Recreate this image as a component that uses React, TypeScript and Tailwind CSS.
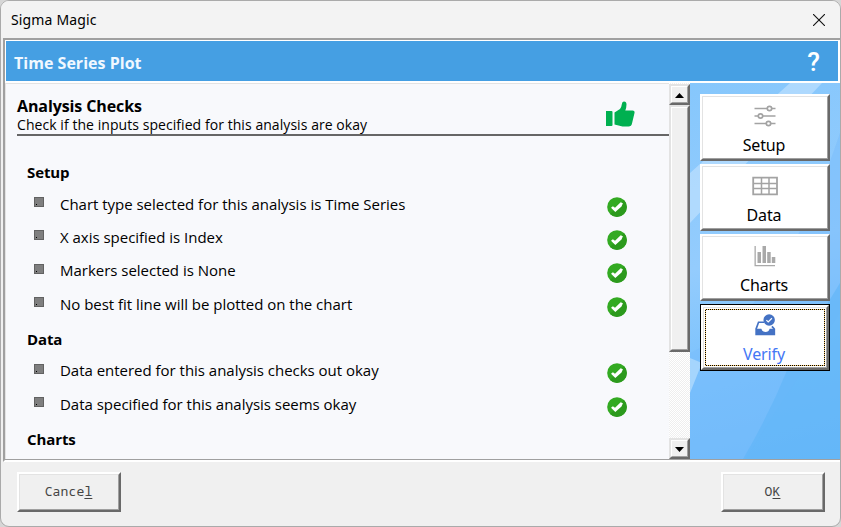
import React from "react";

const bevel =
  "border-2 border-t-white border-l-white border-r-[#696969] border-b-[#696969]";
const innerBevel =
  "border border-t-[#e3e3e3] border-l-[#e3e3e3] border-r-[#a0a0a0] border-b-[#a0a0a0]";

function CheckBadge() {
  return (
    <svg width="20" height="20" viewBox="0 0 20 20">
      <circle cx="10" cy="10" r="9.8" fill="#33aa22" />
      <path d="M17 3a9.8 9.8 0 0 1-14 14z" fill="#2c9a1d" />
      <path d="M4 10.800l1.900-1.500 2.100 1.500 5.700-5.500 2.200 1-1.400 3.300-6.200 5.500z" fill="#fff" />
    </svg>
  );
}

function SetupIcon() {
  return (
    <svg width="26" height="26" viewBox="0 0 26 26" fill="#fff" stroke="#a3a3a3" strokeWidth="1.7">
      <path d="M2.500 5.500h21M2.500 13h21M2.500 20.500h21" />
      <circle cx="17.5" cy="5.500" r="2.200" />
      <circle cx="8.500" cy="13" r="2.200" />
      <circle cx="16.500" cy="20.500" r="2.200" />
    </svg>
  );
}

function DataIcon() {
  return (
    <svg width="26" height="26" viewBox="0 0 26 26" fill="none" stroke="#a3a3a3">
      <path d="M1.200 4.700h23.800v16.600H1.200z" strokeWidth="1.800" />
      <path d="M1 10.500h24M1 15.500h24M9.500 4v18M17 4v18" strokeWidth="1.500" />
    </svg>
  );
}

function ChartsIcon() {
  return (
    <svg width="26" height="26" viewBox="0 0 26 26" fill="#a9a9a9">
      <path d="M2.500 3h1.300v19h19.200v1.300H2.500zM5.500 9h3.500v11H5.500zM10.500 3h3.500v17h-3.500zM15.200 9h3.500v11h-3.500zM19.800 14h3.500v6h-3.500z" />
    </svg>
  );
}

function VerifyIcon() {
  return (
    <svg width="26" height="26" viewBox="0 0 26 26" fill="#4472c4">
      <path d="M2.500 17h6.500q1 3.500 4.500 3.500t4.500-3.500h6v7h-21.500z" />
      <path d="M3.300 17.500l2.700-7.500h6M20.500 14.500l2.700 3" fill="none" stroke="#4472c4" strokeWidth="1.800" />
      <circle cx="17.500" cy="7.500" r="6.200" />
      <path d="M14.500 7.700l2 2 4-4" fill="none" stroke="#fff" strokeWidth="1.300" />
    </svg>
  );
}

function NavButton({ label, icon, active = false }: { label: string; icon: React.ReactNode; active?: boolean }) {
  return (
    <button className={`h-[67px] w-[130px] bg-white ${active ? "border border-black" : ""}`}>
      <span className={`block h-full ${bevel}`}>
        <span className={`block h-full ${innerBevel} ${active ? "p-px" : ""}`}>
          <span
            className={`block h-full ${
              active ? "bg-[repeating-conic-gradient(#000_0_25%,#ffcf70_0_50%)] bg-[length:2px_2px] p-px" : ""
            }`}
          >
            <span
              className={`flex h-full flex-col items-center bg-white ${
                active ? "pt-[3px] text-[#4477f5]" : "pt-[6px] text-black"
              }`}
            >
              {icon}
              <span
                className={`mr-[2px] font-['Noto_Sans',sans-serif] text-[16px] leading-[22px] tracking-[-0.15px] ${
                  active ? "mt-[6px]" : "mt-[5px]"
                }`}
              >
                {label}
              </span>
            </span>
          </span>
        </span>
      </span>
    </button>
  );
}

function Heading({ children }: { children: string }) {
  return (
    <div className="flex h-[33.35px] items-center pt-px pl-[21px] text-[15px] font-bold">
      <span className="tracking-[-0.1px]">{children}</span>
    </div>
  );
}

function Check({ children }: { children: string }) {
  return (
    <div className="flex h-[33.35px] items-center pl-7">
      <span className="mb-[6px] flex size-[10px] items-end border border-[#626262] bg-[#7f7f7f] pb-px pl-px">
        <span className="size-px bg-black" />
      </span>
      <span className="mb-[2px] ml-4 w-[547px] whitespace-nowrap text-[15px] tracking-[-0.02px]">{children}</span>
      <span className="mt-[3px]">
        <CheckBadge />
      </span>
    </div>
  );
}

function ScrollArrow({ down = false }: { down?: boolean }) {
  return (
    <div className="h-[21px] shrink-0 border-2 border-t-[#e3e3e3] border-l-[#e3e3e3] border-r-[#696969] border-b-[#696969] bg-[#f0f0f0]">
      <div className="flex h-full items-center justify-center border border-t-white border-l-white border-r-[#a0a0a0] border-b-[#a0a0a0] pt-[2px]">
        <svg width="9" height="5" viewBox="0 0 9 5">
          <path d={down ? "M0 0h9L4.500 5z" : "M0 5h9L4.500 0z"} />
        </svg>
      </div>
    </div>
  );
}

function FooterButton({ before, accessKey }: { before: string; accessKey: string }) {
  return (
    <button className={`h-10 w-[104px] bg-[#f0f0f0] ${bevel}`}>
      <span className={`flex h-full items-center justify-center font-['Noto_Sans_Mono','DejaVu_Sans_Mono',monospace] text-[13px] text-[#444] ${innerBevel}`}>
        <span className="mr-px tracking-[0.15px]">
          {before}
          <span className="underline underline-offset-2">{accessKey}</span>
        </span>
      </span>
    </button>
  );
}

export default function App() {
  return (
    <div className="h-[527px] w-[841px] overflow-hidden bg-[#d6d6d6] font-['Open_Sans',sans-serif] text-black">
      <div className="flex h-[527px] w-[841px] flex-col overflow-hidden rounded-[9px] border border-[#aaa] bg-[#f0f0f0]">
        <header className="flex h-[37px] shrink-0 items-center justify-between bg-[#f3f3f3] pr-[15px] pl-[10px]">
          <span className="font-['Noto_Sans',sans-serif] text-[14px] tracking-[0.15px]">Sigma Magic</span>
          <svg width="12" height="12" viewBox="0 0 12 12" stroke="#111" strokeWidth="1.1">
            <path d="M0 0l12 12M12 0L0 12" />
          </svg>
        </header>
        <main className="ml-[2px] flex h-[424px] shrink-0 flex-col border-t-2 border-b-2 border-l-2 border-t-[#a0a0a0] border-b-white border-l-[#a0a0a0] bg-white">
          <div className="mt-px mr-[2px] ml-px flex h-10 shrink-0 items-center justify-between bg-[#459fe3] pr-[18px] pl-2 text-white">
            <span className="pt-[4px] text-[16px] font-bold tracking-[0.02px] text-[#f0f8ff]">Time Series Plot</span>
            <span className="pt-[2px] font-['Roboto',sans-serif] text-[26px] leading-none font-medium">?</span>
          </div>
          <div className="mt-[2px] flex min-h-0 flex-1 border-b border-[#a0a0a0]">
            <section className="w-[664px] overflow-hidden border-t border-l border-[#e3e3e3] bg-[#f8f9fc]">
              <div className="ml-[11px] flex h-[52px] justify-between border-b-2 border-[#666]">
                <div className="pt-[12px]">
                  <h1 className="text-[16px] leading-[20px] font-bold">
                    <span className="tracking-[-0.1px]">Analysis Checks</span>
                  </h1>
                  <p className="text-[14px] leading-[17px]">
                    <span className="tracking-[0.06px]">Check if the inputs specified for this analysis are okay</span>
                  </p>
                </div>
                <svg className="mt-[16px] mr-[34px]" width="30" height="28" viewBox="0 0 30 28" fill="#00b050">
                  <path d="M1 11h5.500q1 0 1 1v13q0 1-1 1H1zM9.500 12.500l5.500-3.500q1.500-2 2-5.500.2-2 2-2 2.500 0 2.500 3 0 3-1.200 6h7.200q2.500 0 2 2.500l-2.500 10.500q-.5 3-3.500 3h-6l-8-2z" />
                </svg>
              </div>
              <div className="mt-[19px]">
                <Heading>Setup</Heading>
                <Check>Chart type selected for this analysis is Time Series</Check>
                <Check>X axis specified is Index</Check>
                <Check>Markers selected is None</Check>
                <Check>No best fit line will be plotted on the chart</Check>
                <Heading>Data</Heading>
                <Check>Data entered for this analysis checks out okay</Check>
                <Check>Data specified for this analysis seems okay</Check>
                <Heading>Charts</Heading>
              </div>
            </section>
            <div className="flex w-[21px] flex-col bg-[repeating-conic-gradient(#eee_0_25%,#fff_0_50%)] bg-[length:2px_2px] pt-px">
              <ScrollArrow />
              <div className="h-[247px] border-2 border-t-[#e3e3e3] border-l-[#e3e3e3] border-r-[#696969] border-b-[#696969] bg-[#f0f0f0]">
                <div className="h-full border border-t-white border-l-white border-r-[#a0a0a0] border-b-[#a0a0a0]" />
              </div>
              <div className="flex-1" />
              <ScrollArrow down />
            </div>
            <nav className="relative flex flex-1 flex-col overflow-hidden bg-[linear-gradient(165deg,#86c7fc_0%,#94ccfd_45%,#76c0fc_75%,#6bb9fa_100%)] pt-[11px] pl-[10px]">
              <svg className="absolute inset-0 size-full" viewBox="0 0 150 376" preserveAspectRatio="none">
                <path d="M100 0h32L0 140v-50z" fill="#c7e5ff" opacity=".6" />
                <path d="M150 50v180L55 376H0V270Q90 230 150 50z" fill="#78bcfb" opacity=".5" />
                <path d="M98 285Q80 330 53 376h97V200z" fill="#61b5f7" opacity=".65" />
                <path d="M0 275L12 280 0 310z" fill="#a5d5fd" />
              </svg>
              <div className="relative flex flex-col gap-[3px]">
                <NavButton label="Setup" icon={<SetupIcon />} />
                <NavButton label="Data" icon={<DataIcon />} />
                <NavButton label="Charts" icon={<ChartsIcon />} />
                <NavButton label="Verify" icon={<VerifyIcon />} active />
              </div>
            </nav>
          </div>
        </main>
        <footer className="flex items-start justify-between pt-[10px] pr-[15px] pl-[16px]">
          <FooterButton before="Cance" accessKey="l" />
          <FooterButton before="O" accessKey="K" />
        </footer>
      </div>
    </div>
  );
}
